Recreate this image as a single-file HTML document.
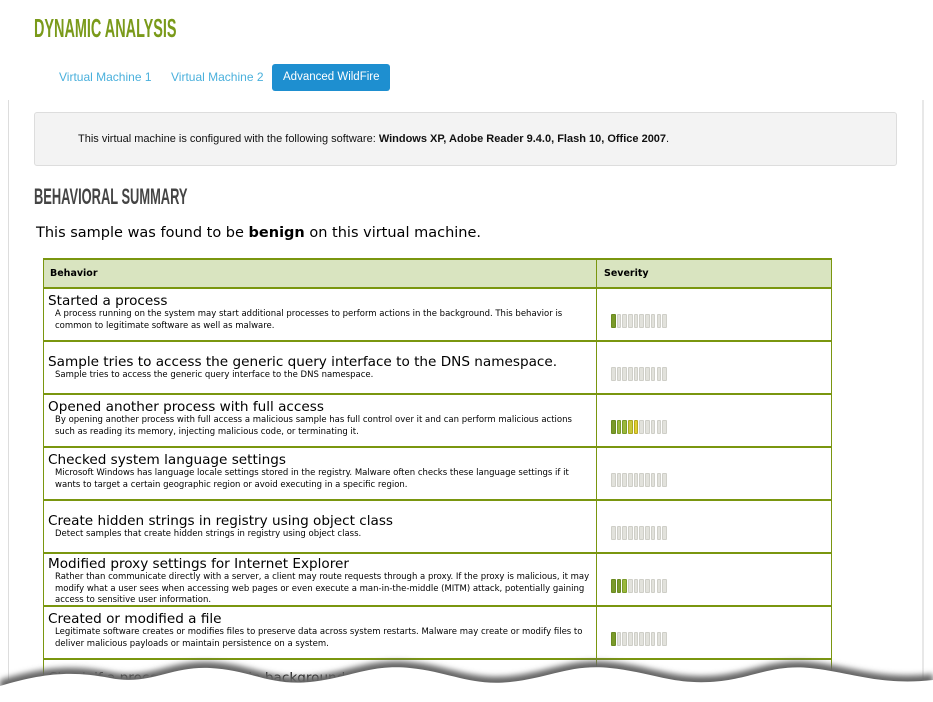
<!DOCTYPE html>
<html><head><style>
html,body{margin:0;width:933px;height:702px;overflow:hidden}
body{background:#fff;font-family:"DejaVu Sans",sans-serif;position:relative}
.paper{position:absolute;left:8px;top:100px;width:913px;height:580px;border-left:1px solid #ddd;border-right:2px solid #e8e8e8}
.h1{position:absolute;left:34px;top:13px;font:bold 26px "Liberation Sans",sans-serif;color:#7a9a1a;transform:scaleX(.555);transform-origin:0 0}
.tabs{position:absolute;top:64px;left:0;font:12px "Liberation Sans",sans-serif}
.tab{position:absolute;top:0;height:27px;line-height:27px;color:#4ab0dc;white-space:nowrap}
.tab.a{background:#1e8fd0;color:#fff;border-radius:3px;padding:0 11px;left:272px;font-size:11.5px;width:96px}
.box{position:absolute;left:34px;top:112px;width:863px;height:54px;background:#f3f3f3;border:1px solid #ddd;border-radius:3px;font:11px "Liberation Sans",sans-serif;color:#111;line-height:52px;box-sizing:border-box;padding-left:43px}
.h2{position:absolute;left:34px;top:184px;font:bold 22px "Liberation Sans",sans-serif;color:#444;transform:scaleX(.585);transform-origin:0 0}
.sum{position:absolute;left:36px;top:225px;font-size:14.5px;color:#000}
.tbl{position:absolute;left:43px;top:258px;width:787px;border-left:1px solid #7a960f;border-right:1px solid #7a960f}
.row{position:relative;height:53px;border-top:2px solid #7a960f;box-sizing:border-box}
.row.h{height:29px;background:#d9e4c0;font-size:9.5px;font-weight:bold}
.row.h .c1{padding:8px 0 0 6px}
.row.h .c2{padding:8px 0 0 6px}
.c1{position:absolute;left:0;top:0;width:553px;height:100%;box-sizing:border-box;padding:4px 0 0 4px;border-right:1px solid #7a960f}
.c2{position:absolute;left:554px;top:0;right:0;height:100%;box-sizing:border-box}
.t{font-size:13.6px;line-height:16px}
.d{font-size:8.5px;line-height:11.5px;padding-left:7px;padding-right:6px}
.bars{position:absolute;left:13px;top:25px;display:flex}
.bars span{width:2.5px;height:12px;border:1px solid #cfcfc8;background:#e2e2dc;margin-right:1.2px;border-radius:1px}
.bars span.g{background:#7a9a2a;border-color:#6a8a20}
.bars span.l{background:#9ab83a;border-color:#7a9a2a}
.bars span.y{background:#c8c83a;border-color:#a8a820}
.bars span.o{background:#e0d030;border-color:#b8a820}
</style></head><body>
<div class="paper"></div>
<div class="h1">DYNAMIC ANALYSIS</div>
<div class="tabs">
<div class="tab" style="left:59px">Virtual Machine 1</div>
<div class="tab" style="left:171px">Virtual Machine 2</div>
<div class="tab a">Advanced WildFire</div>
</div>
<div class="box">This virtual machine is configured with the following software: <b>Windows XP, Adobe Reader 9.4.0, Flash 10, Office 2007</b>.</div>
<div class="h2">BEHAVIORAL SUMMARY</div>
<div class="sum">This sample was found to be <b>benign</b> on this virtual machine.</div>
<div class="tbl">
<div class="row h"><div class="c1">Behavior</div><div class="c2">Severity</div></div>
<div class="row"><div class="c1"><div class="t">Started a process</div><div class="d">A process running on the system may start additional processes to perform actions in the background. This behavior is common to legitimate software as well as malware.</div></div><div class="c2"><div class="bars"><span class="g"></span><span></span><span></span><span></span><span></span><span></span><span></span><span></span><span></span><span></span></div></div></div>
<div class="row"><div class="c1" style="padding-top:12px"><div class="t">Sample tries to access the generic query interface to the DNS namespace.</div><div class="d">Sample tries to access the generic query interface to the DNS namespace.</div></div><div class="c2"><div class="bars"><span></span><span></span><span></span><span></span><span></span><span></span><span></span><span></span><span></span><span></span></div></div></div>
<div class="row"><div class="c1"><div class="t">Opened another process with full access</div><div class="d">By opening another process with full access a malicious sample has full control over it and can perform malicious actions such as reading its memory, injecting malicious code, or terminating it.</div></div><div class="c2"><div class="bars"><span class="g"></span><span class="l"></span><span class="l"></span><span class="y"></span><span class="o"></span><span></span><span></span><span></span><span></span><span></span></div></div></div>
<div class="row"><div class="c1"><div class="t">Checked system language settings</div><div class="d">Microsoft Windows has language locale settings stored in the registry. Malware often checks these language settings if it wants to target a certain geographic region or avoid executing in a specific region.</div></div><div class="c2"><div class="bars"><span></span><span></span><span></span><span></span><span></span><span></span><span></span><span></span><span></span><span></span></div></div></div>
<div class="row"><div class="c1" style="padding-top:12px"><div class="t">Create hidden strings in registry using object class</div><div class="d">Detect samples that create hidden strings in registry using object class.</div></div><div class="c2"><div class="bars"><span></span><span></span><span></span><span></span><span></span><span></span><span></span><span></span><span></span><span></span></div></div></div>
<div class="row"><div class="c1" style="padding-top:2px"><div class="t">Modified proxy settings for Internet Explorer</div><div class="d">Rather than communicate directly with a server, a client may route requests through a proxy. If the proxy is malicious, it may modify what a user sees when accessing web pages or even execute a man-in-the-middle (MITM) attack, potentially gaining access to sensitive user information.</div></div><div class="c2"><div class="bars"><span class="g"></span><span class="g"></span><span class="l"></span><span></span><span></span><span></span><span></span><span></span><span></span><span></span></div></div></div>
<div class="row"><div class="c1"><div class="t">Created or modified a file</div><div class="d">Legitimate software creates or modifies files to preserve data across system restarts. Malware may create or modify files to deliver malicious payloads or maintain persistence on a system.</div></div><div class="c2"><div class="bars"><span class="g"></span><span></span><span></span><span></span><span></span><span></span><span></span><span></span><span></span><span></span></div></div></div>
<div class="row" style="height:20px"><div class="c1" style="padding-top:10px"><div class="t">Check if a process is running in background</div></div><div class="c2"></div></div>
</div>
<svg style="position:absolute;left:0;top:640px" width="933" height="62">
<defs><filter id="f" x="-5%" y="-50%" width="110%" height="200%"><feGaussianBlur stdDeviation="3"/></filter></defs>
<path d="M0,38 C40,26 70,22 110,30 C150,38 170,18 210,20 C250,22 270,38 310,34 C350,30 370,16 410,20 C450,24 470,38 510,34 C550,30 570,16 610,20 C650,24 670,36 710,34 C750,32 770,16 810,20 C850,24 880,38 933,32 L933,62 L0,62 Z" fill="#666" filter="url(#f)" transform="translate(0,2)"/>
<path d="M0,38 C40,26 70,22 110,30 C150,38 170,18 210,20 C250,22 270,38 310,34 C350,30 370,16 410,20 C450,24 470,38 510,34 C550,30 570,16 610,20 C650,24 670,36 710,34 C750,32 770,16 810,20 C850,24 880,38 933,32 L933,62 L0,62 Z" fill="#fff" transform="translate(0,8)"/>
</svg>
</body></html>
